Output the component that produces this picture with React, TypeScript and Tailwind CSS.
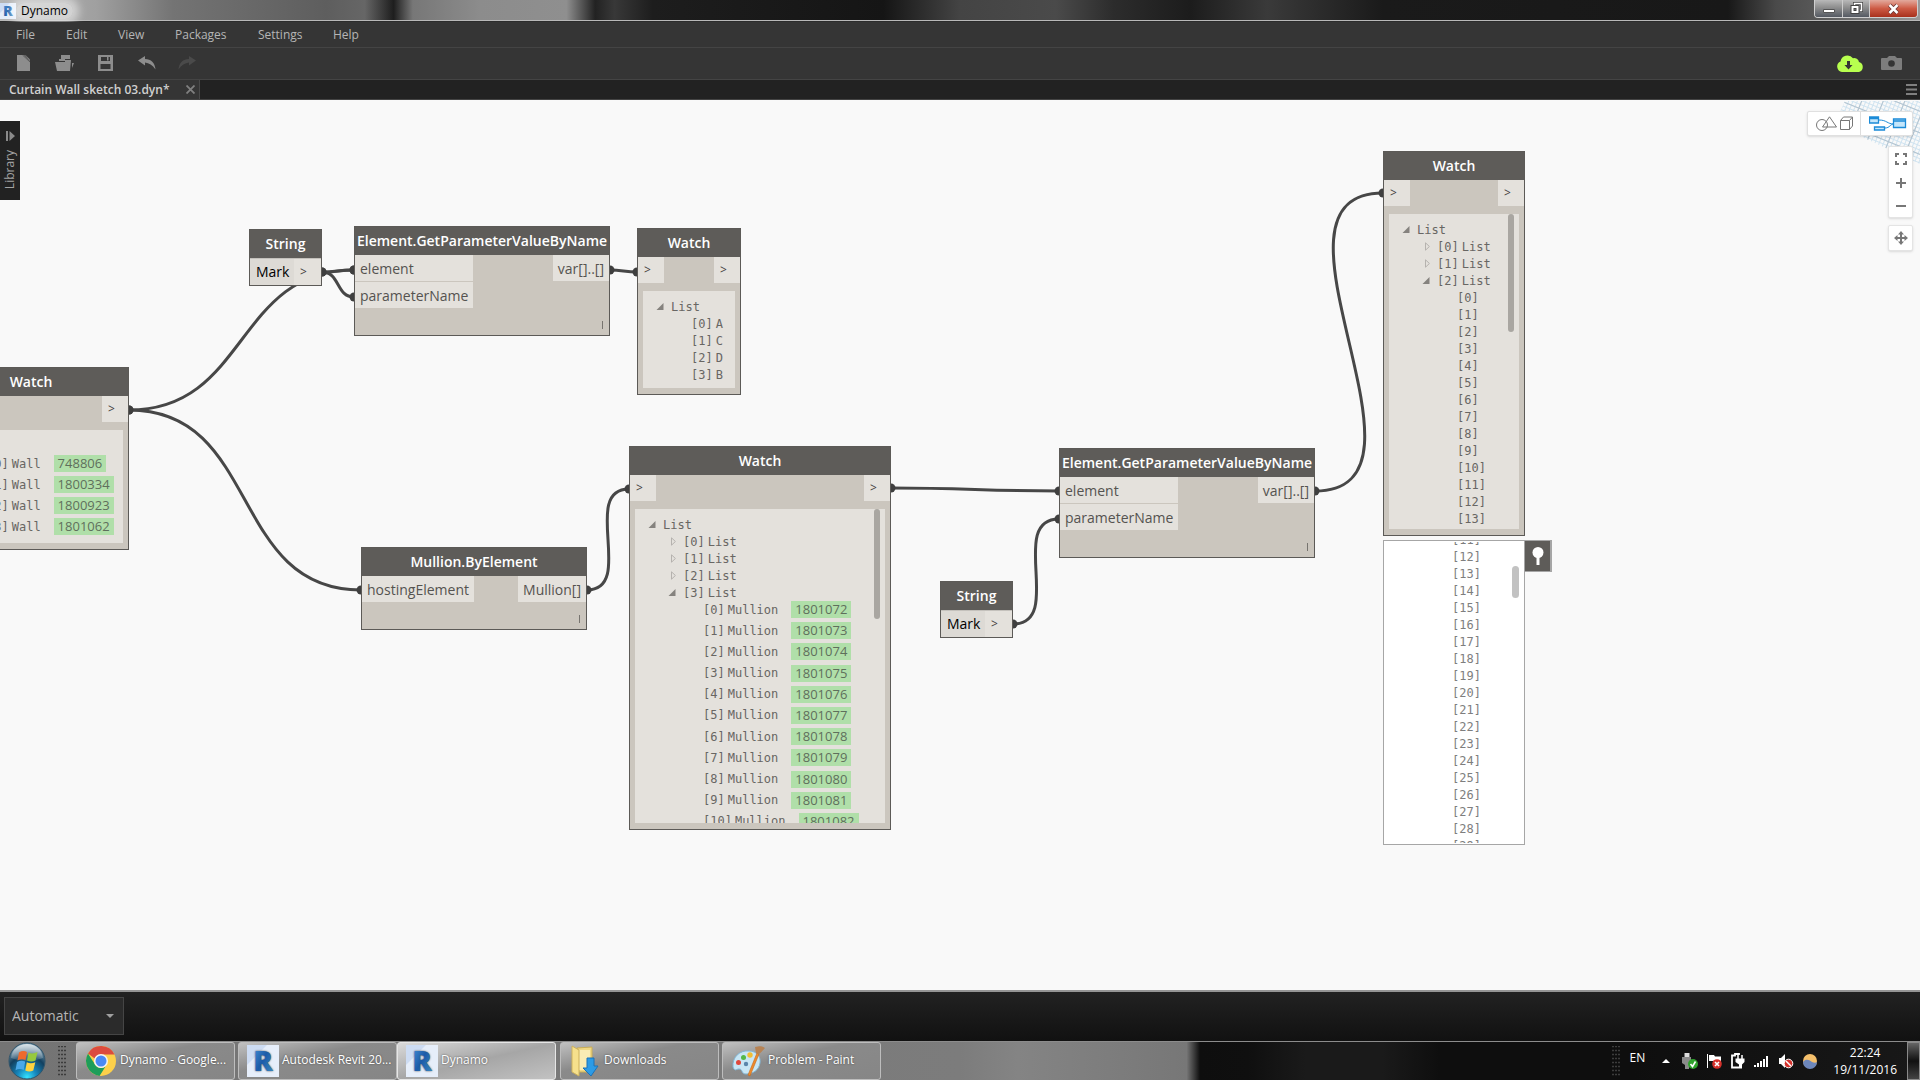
import type { ReactNode } from "react";
import { clsx } from "clsx";

const MENUS = [
    { label: "File", className: "w-[50px]" },
    { label: "Edit", className: "w-[52px]" },
    { label: "View", className: "w-[57px]" },
    { label: "Packages", className: "w-[83px]" },
    { label: "Settings", className: "w-[75px]" },
    { label: "Help", className: "w-[50px]" },
];

// [x1, y1, x2, y2] in canvas coordinates
const WIRES = [
    [129, 310, 354, 170],
    [129, 310, 361, 490],
    [322, 172, 354, 170],
    [322, 172, 354, 197],
    [610, 170, 637, 172],
    [587, 490, 629, 389],
    [891, 388, 1059, 391],
    [1013, 524, 1059, 419],
    [1315, 391, 1383, 93],
];

const WALLS = ["748806", "1800334", "1800923", "1801062"];
const MULLIONS = Array.from({ length: 11 }, (_, i) => String(1801072 + i));
const MARKS = ["A", "C", "D", "B"];

function wirePath([x1, y1, x2, y2]: number[]) {
    const off = Math.round(Math.hypot(x2 - x1, y2 - y1) * 0.45);
    return `M${x1} ${y1} C${x1 + off} ${y1} ${x2 - off} ${y2} ${x2} ${y2}`;
}

function Wires() {
    return (
        <svg className="absolute inset-0 h-full w-full" fill="none" aria-hidden="true">
            {WIRES.map((w) => (
                <g key={w.join()}>
                    <path d={wirePath(w)} stroke="#474747" strokeWidth="3" />
                    <circle cx={w[0]} cy={w[1]} r="4.5" fill="#3f3f3f" />
                    <circle cx={w[2]} cy={w[3]} r="4.5" fill="#3f3f3f" />
                </g>
            ))}
        </svg>
    );
}

/* ---------- nodes ---------- */

function Node({ title, className, children }: { title: string; className: string; children: ReactNode }) {
    return (
        <section className={clsx("absolute flex flex-col border border-[#5c5a57] bg-[#cbc6be]", className)}>
            <h2 className="flex h-7 shrink-0 items-center justify-center bg-[#5e5c59] pb-[2px] text-[14px] font-semibold whitespace-nowrap text-white">
                {title}
            </h2>
            {children}
        </section>
    );
}

function Port({ label, className }: { label: string; className?: string }) {
    return (
        <div className={clsx("flex h-[26px] items-center bg-[#e4e1dc] px-[5px] text-[14px] text-[#555350]", className)}>
            {label}
        </div>
    );
}

function ArrowPort() {
    return (
        <div className="flex h-[26px] w-[26px] items-center bg-[#e4e1dc] pl-[6px] text-[12px] text-[#45433f]">&gt;</div>
    );
}

function Lacing() {
    return <div className="mt-auto mr-[6px] mb-[6px] h-2 w-px self-end bg-[#77746f]" />;
}

function Watch({
    className,
    scroll,
    children,
}: {
    className: string;
    scroll?: string;
    children: ReactNode;
}) {
    return (
        <Node title="Watch" className={className}>
            <div className="flex justify-between">
                <ArrowPort />
                <ArrowPort />
            </div>
            <div className="relative mx-[5px] mt-2 mb-[6px] min-h-0 flex-1 overflow-hidden bg-[#e4e1dc] pt-[7px]">
                {children}
                {scroll && <div className={clsx("absolute top-0 right-[5px] w-[6px] rounded-full bg-[#a9a6a1]", scroll)} />}
            </div>
        </Node>
    );
}

function StringNode({ id, className }: { id: string; className: string }) {
    return (
        <Node title="String" className={className}>
            <div className="flex border-t border-[#c4c1bc] bg-[#e4e1dc]">
                <input
                    id={id}
                    aria-label="String value"
                    defaultValue="Mark"
                    className="h-[26px] w-11 bg-[#dddad5] pb-px pl-[6px] text-[14px] text-black outline-none"
                />
                <ArrowPort />
            </div>
        </Node>
    );
}

function GetParameterNode({ className }: { className: string }) {
    return (
        <Node title="Element.GetParameterValueByName" className={className}>
            <div className="flex items-start justify-between">
                <div className="flex w-[118px] flex-col gap-px">
                    <Port label="element" />
                    <Port label="parameterName" />
                </div>
                <Port label="var[]..[]" />
            </div>
            <Lacing />
        </Node>
    );
}

/* ---------- watch tree ---------- */

const INDENT = ["pl-[13px]", "pl-[33px]", "pl-[53px]"];

function Expander({ open }: { open: boolean }) {
    return (
        <button aria-label={open ? "Collapse" : "Expand"} className="block">
            <svg width="8" height="9" viewBox="0 0 8 9">
                {open ? (
                    <path d="M7.5 1v7H.5z" fill="#85827e" />
                ) : (
                    <path d="M3.5.8v7.4L7.4 4.5z" fill="none" stroke="#b5b2ae" />
                )}
            </svg>
        </button>
    );
}

function Row({
    depth,
    index,
    label,
    chip,
    open,
}: {
    depth: number;
    index?: number;
    label?: string;
    chip?: string;
    open?: boolean;
}) {
    return (
        <li
            className={clsx(
                "flex h-[17px] shrink-0 items-center font-['DejaVu_Sans_Mono','Liberation_Mono',monospace] text-[12px] whitespace-nowrap",
                INDENT[depth]
            )}
        >
            <span className="w-[15px] shrink-0">{open !== undefined && <Expander open={open} />}</span>
            {index !== undefined && <span className="mr-[3px]">[{index}]</span>}
            {label}
            {chip && (
                <a
                    href="#element"
                    className="ml-[13px] h-[17px] bg-[#b0dfa9] px-[4px] font-['Open_Sans',sans-serif] text-[13px] leading-[17px] text-[#5f6f5c]"
                >
                    {chip}
                </a>
            )}
        </li>
    );
}

/* ---------- icons ---------- */

function RevitLogo({ size }: { size: number }) {
    return (
        <svg width={size} height={size} viewBox="0 0 32 32" className="shrink-0" aria-hidden="true">
            <defs>
                <linearGradient id="revit" x1="0" y1="0" x2="1" y2="1">
                    <stop offset="0" stopColor="#4d9be0" />
                    <stop offset=".5" stopColor="#1c5ba8" />
                    <stop offset="1" stopColor="#3f8fc4" />
                </linearGradient>
            </defs>
            <path d="M0 0h32v32H0z" fill="#e6eefa" />
            <path d="M0 20 20 0H0z" fill="#cddcf3" />
            <text x="16" y="26" textAnchor="middle" fontFamily="Open Sans" fontWeight="800" fontSize="29" fill="url(#revit)">
                R
            </text>
        </svg>
    );
}

function StartOrb() {
    return (
        <svg width="38" height="38" viewBox="0 0 38 38">
            <defs>
                <radialGradient id="orb" cx=".5" cy=".95" r=".9">
                    <stop offset="0" stopColor="#35e4ff" />
                    <stop offset=".3" stopColor="#1687bd" />
                    <stop offset=".65" stopColor="#12405f" />
                    <stop offset="1" stopColor="#7f9fb2" />
                </radialGradient>
                <linearGradient id="orbGloss" x1="0" y1="0" x2="0" y2="1">
                    <stop offset="0" stopColor="#fff" stopOpacity=".7" />
                    <stop offset="1" stopColor="#fff" stopOpacity=".1" />
                </linearGradient>
            </defs>
            <circle cx="19" cy="19" r="18" fill="url(#orb)" stroke="#31556b" />
            <path d="M3 16C4 7 11 2 19 2s15 5 16 14c-10 4-22 4-32 0z" fill="url(#orbGloss)" />
            <path d="M11 10.500q4-2.500 8-.5l-1.500 8q-4-1.500-8 .5z" fill="#ee6a2c" />
            <path d="M20.500 10.500q4 2 9-.5l-2 8.500q-4 2-8.500 0z" fill="#96c93d" />
            <path d="M9 20q4-2.300 8.200-.4L15.700 28q-4-2-8.200.2z" fill="#4aa8e8" />
            <path d="M18.800 20.300q4 2 8.500 0l-2 8.200q-4 2-8 0z" fill="#fdd23e" />
        </svg>
    );
}

function ChromeLogo() {
    return (
        <svg width="32" height="32" viewBox="0 0 32 32" className="shrink-0">
            <circle cx="16" cy="16" r="15" fill="#fdd04a" />
            <path d="M3 8.500A15 15 0 0 1 29.500 9.500H16a7 7 0 0 0-6.300 4z" fill="#dc4b3e" />
            <path d="M3 8.500a15 15 0 0 0 11.500 22.400L20.500 21.500a7 7 0 0 1-10.500-2z" fill="#1d9d5a" />
            <circle cx="16" cy="16" r="7" fill="#f4f4f4" />
            <circle cx="16" cy="16" r="5.500" fill="#4a89f4" />
        </svg>
    );
}

function FolderIcon() {
    return (
        <svg width="32" height="32" viewBox="0 0 32 32" className="shrink-0">
            <path d="M8 3 23 2v25H10z" fill="#f0d884" stroke="#c9ad56" />
            <path d="M10 5h11v20H10z" fill="#f9ecb5" />
            <path d="m3 1 7 4v26l-7-4z" fill="#f6e08c" stroke="#cdb15c" />
            <path d="M18 13h7v8h4l-7 10-8-8h4z" fill="#2c9be6" stroke="#1b73b9" />
        </svg>
    );
}

function PaintIcon() {
    return (
        <svg width="34" height="32" viewBox="0 0 34 32" className="shrink-0">
            <path d="M2 22C1 12 9 5 18 6c8 0 12 6 11 12-1 7-7 11-14 11-5 0-3-5-7-5-3 0-4 3-6-2z" fill="#c8e6f5" stroke="#82b7d6" />
            <circle cx="7.500" cy="17.500" r="2.500" fill="#e0483c" />
            <circle cx="12.500" cy="12.500" r="2.500" fill="#53b848" />
            <circle cx="19" cy="10" r="2.700" fill="#f1be36" />
            <circle cx="15" cy="19" r="2.200" fill="#5a86aa" />
            <path d="m26 8 2 1-9 22-2-1z" fill="#ee8a2d" stroke="#c46a1b" strokeWidth=".6" />
            <path d="M24 2c4 0 5-2 10 1-2 2-3 4-6 6l-3-1z" fill="#b78354" />
        </svg>
    );
}

function Grip() {
    return (
        <svg width="8" height="30" viewBox="0 0 8 30" aria-hidden="true">
            {[0, 4, 8, 12, 16, 20, 24, 28].map((y) => (
                <path key={y} d={`M0 ${y + 0.5}h2m1 0h2m1 0h2`} stroke="#3c3c3c" strokeWidth="1.500" />
            ))}
        </svg>
    );
}

/* ---------- window chrome ---------- */

function TitleBar() {
    return (
        <header className="flex h-[22px] shrink-0 items-start justify-between border-b border-[#2c2c2c] bg-[linear-gradient(90deg,#b4b4b4_0%,#a0a0a0_5%,#747474_9%,#6e6e6e_11%,#5e5e5e_17%,#666_19%,#1e1e1e_20.500%,#777_21.500%,#8c8c8c_25%,#8f8f8f_29.500%,#222_31%,#383838_32%,#1d1d1d_34%,#151515_46%,#444_50%,#4a4a4a_55%,#2c2c2c_58%,#1c1c1c_62%,#3a3a3a_66%,#1a1a1a_72%,#181818_90%,#4a4a4a_92.500%,#5b5b5b_95%,#777_97%,#999_100%)]">
            <div className="flex h-[21px] flex-1 items-center border-b border-[#b9b9b9] pt-[2px]">
                <RevitLogo size={16} />
                <h1 className="rounded-full bg-white/50 px-[5px] text-[12px] leading-4 text-black shadow-[0_0_8px_6px_rgba(255,255,255,0.5)]">
                    Dynamo
                </h1>
            </div>
            <div className="flex h-[21px] border-b border-[#b9b9b9] pr-[2px]">
                <div className="flex h-[18px] overflow-hidden rounded-b-[4px] border border-t-0 border-[#d0d0d0]">
                    <button
                        aria-label="Minimize"
                        className="flex w-7 items-center justify-center border-r border-[#ccc] bg-linear-to-b from-[#b9b9b9] via-[#8d8d8d] via-45% to-[#555a63]"
                    >
                        <svg width="12" height="12" viewBox="0 0 12 12">
                            <path d="M.5 6.500h11v3H.5z" fill="#fff" stroke="#555" />
                        </svg>
                    </button>
                    <button
                        aria-label="Restore"
                        className="flex w-[27px] items-center justify-center border-r border-[#ccc] bg-linear-to-b from-[#b9b9b9] via-[#8d8d8d] via-45% to-[#555a63]"
                    >
                        <svg width="13" height="13" viewBox="0 0 13 13" fill="none">
                            <path d="M4.500 3V1.500h7v7H10" stroke="#444" strokeWidth="3" />
                            <path d="M4.500 3V1.500h7v7H10" stroke="#fff" strokeWidth="1.500" />
                            <path d="M2.500 5h5v5h-5z" stroke="#444" strokeWidth="4" />
                            <path d="M2.500 5h5v5h-5z" stroke="#fff" strokeWidth="2" />
                        </svg>
                    </button>
                    <button
                        aria-label="Close"
                        className="flex w-[47px] items-center justify-center bg-linear-to-b from-[#e2a99d] via-[#cd5a44] via-50% to-[#a8301c]"
                    >
                        <svg width="13" height="12" viewBox="0 0 13 12">
                            <path d="m2.500 2 8 8m0-8-8 8" stroke="#633" strokeWidth="4" />
                            <path d="m2.500 2 8 8m0-8-8 8" stroke="#fff" strokeWidth="2.500" />
                        </svg>
                    </button>
                </div>
            </div>
        </header>
    );
}

function MenuBar() {
    return (
        <nav className="flex h-[26px] shrink-0 items-center border-b border-[#444] bg-[#353535] pl-4">
            {MENUS.map((m) => (
                <button key={m.label} className={clsx("text-left text-[12px] leading-4 text-[#b5b5b5]", m.className)}>
                    {m.label}
                </button>
            ))}
        </nav>
    );
}

function Toolbar() {
    return (
        <div className="flex h-[31px] shrink-0 items-center justify-between bg-[#353535] pr-[18px] pb-px pl-[17px]">
            <div className="flex items-center">
                <button aria-label="New" className="w-[38px]">
                    <svg width="13" height="16" viewBox="0 0 13 16">
                        <path d="M0 0h7l6 6v10H0z" fill="#8d8d8d" />
                        <path d="M8 0h.5L13 4.500V6z" fill="#8d8d8d" />
                        <path d="M5.500 0 13 7" stroke="#5a5a5a" fill="none" />
                    </svg>
                </button>
                <button aria-label="Open" className="w-[43px]">
                    <svg width="19" height="16" viewBox="0 0 19 16" fill="#8d8d8d">
                        <path d="M6 0h9v4l-5 0v2H4V4h2z" />
                        <path d="M0 7h10V5h6l-1 11H2z" />
                        <path d="M17 8h2l-2 5z" />
                    </svg>
                </button>
                <button aria-label="Save" className="w-10">
                    <svg width="15" height="16" viewBox="0 0 15 16">
                        <path d="M0 0h15v16H0z" fill="#8d8d8d" />
                        <path d="M3 2h9v4H3zM2.500 9h10v5h-10z" fill="#353535" />
                        <path d="M9 1.500h1.500v4H9z" fill="#8d8d8d" />
                    </svg>
                </button>
                <button aria-label="Undo" className="w-10">
                    <svg width="18" height="14" viewBox="0 0 18 14">
                        <path d="m0 4.500 7-4.500v3c6 0 10 4 10.500 10.500C14.500 9 11 7 7 6.500v3z" fill="#8d8d8d" />
                    </svg>
                </button>
                <button aria-label="Redo" disabled>
                    <svg width="18" height="14" viewBox="0 0 18 14">
                        <path d="m18 4.500-7-4.500v3C5 3 1 7 .5 13.500 3.500 9 7 7 11 6.500v3z" fill="#4a4a4a" />
                    </svg>
                </button>
            </div>
            <div className="flex items-center gap-[17px]">
                <button aria-label="Download update">
                    <svg width="28" height="17" viewBox="0 0 28 17">
                        <path d="M6 17a5.500 5.500 0 0 1-1.500-10.500A7 7 0 0 1 17 3.200a5 5 0 0 1 6 3.800A5.200 5.200 0 0 1 23 17z" fill="#b8ff4f" />
                        <path d="M11 6h3v4h2.500l-4 4.500-4-4.500H11z" fill="#353535" />
                    </svg>
                </button>
                <button aria-label="Export image">
                    <svg width="21" height="14" viewBox="0 0 21 14">
                        <path d="M0 3q0-1 1-1h5l2-2h6l2 2h4q1 0 1 1v10q0 1-1 1H1q-1 0-1-1z" fill="#7d7d7d" />
                        <circle cx="10.500" cy="7.500" r="3.300" fill="#353535" />
                    </svg>
                </button>
            </div>
        </div>
    );
}

function TabBar() {
    return (
        <div className="flex h-[21px] shrink-0 items-stretch justify-between border-t border-b border-[#444] bg-[#222]">
            <div className="flex w-[200px] items-center justify-between border-r border-[#4a4a4a] bg-[#353535] pr-1 pl-[9px]">
                <button className="text-[12px] leading-4 font-semibold text-[#d0d0d0]">Curtain Wall sketch 03.dyn*</button>
                <button aria-label="Close tab">
                    <svg width="9" height="9" viewBox="0 0 9 9">
                        <path d="m.5.5 8 8m0-8-8 8" stroke="#808080" strokeWidth="1.800" />
                    </svg>
                </button>
            </div>
            <button aria-label="Open tabs" className="pr-[3px]">
                <svg width="11" height="11" viewBox="0 0 11 11">
                    <path d="M0 1h11M0 5.500h11M0 10h11" stroke="#808080" strokeWidth="2" />
                </svg>
            </button>
        </div>
    );
}

function BackgroundGrid() {
    return (
        <svg className="absolute top-0 right-0" width="80" height="66" viewBox="0 0 80 66" fill="none" aria-hidden="true">
            <defs>
                <pattern id="fine" width="4" height="4" patternUnits="userSpaceOnUse" patternTransform="rotate(22)">
                    <path d="M0 .5h4M.5 0v4" stroke="#cfe3f0" />
                </pattern>
                <pattern id="coarse" width="20" height="20" patternUnits="userSpaceOnUse" patternTransform="rotate(22)">
                    <path d="M0 .5h20M.5 0v20" stroke="#b3c3cf" />
                </pattern>
            </defs>
            <path d="M5 1h75v63L20 36 0 12z" fill="url(#fine)" />
            <path d="M5 1h75v63L20 36 0 12z" fill="url(#coarse)" />
        </svg>
    );
}

function ViewControls() {
    return (
        <div className="absolute top-[11px] right-[7px] flex flex-col items-end">
            <div className="flex h-[25px] rounded-[2px] border border-[#e0e0e0] bg-white shadow-sm">
                <button aria-label="3D view" className="flex w-[53px] items-center justify-center border-r border-[#ddd]">
                    <svg width="37" height="15" viewBox="0 0 37 15" fill="none" stroke="#777">
                        <circle cx="6" cy="9" r="5.500" />
                        <path d="M13.500.8 20.500 11h-14zM24.500 4.500h9v9h-9zl3-3.500h9v9l-3 3.500m0-9 3-3.500" />
                    </svg>
                </button>
                <button aria-label="Graph view" className="flex w-[51px] items-center justify-end pr-[5px]">
                    <svg width="38" height="15" viewBox="0 0 38 15" fill="#c4e6fb" stroke="#1b8bd8">
                        <path d="M10 4c8 0 8 4 15 4M16 12c5 0 5-4 9-4" fill="none" />
                        <path d="M.5 1h9v6h-9zM.5 2.500h9M5.500 11h10v3h-10zM24.500 3h12v8.500h-12zM24.500 5h12" strokeWidth="1.300" />
                    </svg>
                </button>
            </div>
            <div className="mt-[10px] flex w-[25px] flex-col items-center rounded-[2px] border border-[#e4e4e4] bg-white text-[#777] shadow-sm">
                <button aria-label="Zoom to fit" className="flex h-6 items-center">
                    <svg width="12" height="12" viewBox="0 0 12 12" fill="none" stroke="currentColor" strokeWidth="2">
                        <path d="M1 4V1h3M8 1h3v3M11 8v3H8M4 11H1V8" />
                    </svg>
                </button>
                <button aria-label="Zoom in" className="flex h-6 items-center">
                    <svg width="10" height="10" viewBox="0 0 10 10" stroke="currentColor" strokeWidth="2">
                        <path d="M5 0v10M0 5h10" />
                    </svg>
                </button>
                <button aria-label="Zoom out" className="flex h-[22px] items-center">
                    <svg width="10" height="10" viewBox="0 0 10 10" stroke="currentColor" strokeWidth="2">
                        <path d="M0 5h10" />
                    </svg>
                </button>
            </div>
            <button
                aria-label="Pan"
                className="mt-[7px] flex h-[26px] w-[25px] items-center justify-center rounded-[2px] border border-[#e4e4e4] bg-white text-[#777] shadow-sm"
            >
                <svg width="14" height="14" viewBox="0 0 14 14" fill="currentColor">
                    <path d="M6 2h2v10H6zM2 6h10v2H2z" />
                    <path d="m7 0 3 3.500H4zM7 14l3-3.500H4zM0 7l3.500-3v6zM14 7l-3.500-3v6z" />
                </svg>
            </button>
        </div>
    );
}

function Canvas() {
    return (
        <main className="relative min-h-0 flex-1 overflow-hidden bg-[#f9f9f9]">
            <BackgroundGrid />
            <Wires />

            <Watch className="top-[267px] -left-[67px] h-[183px] w-[196px]">
                <ul className="text-[#686663]">
                    <Row depth={0} label="List" open />
                </ul>
                <ul className="mt-px flex flex-col gap-1 text-[#686663]">
                    {WALLS.map((id, i) => (
                        <Row key={id} depth={1} index={i} label="Wall" chip={id} />
                    ))}
                </ul>
            </Watch>

            <StringNode id="string-1" className="top-[129px] left-[249px] w-[73px]" />
            <GetParameterNode className="top-[126px] left-[354px] h-[110px] w-[256px]" />

            <Watch className="top-[128px] left-[637px] h-[167px] w-[104px]">
                <ul className="text-[#686663]">
                    <Row depth={0} label="List" open />
                    {MARKS.map((mark, i) => (
                        <Row key={mark} depth={1} index={i} label={mark} />
                    ))}
                </ul>
            </Watch>

            <Node title="Mullion.ByElement" className="top-[447px] left-[361px] h-[83px] w-[226px]">
                <div className="flex justify-between">
                    <Port label="hostingElement" className="w-[112px]" />
                    <Port label="Mullion[]" />
                </div>
                <Lacing />
            </Node>

            <Watch className="top-[346px] left-[629px] h-[384px] w-[262px]" scroll="h-[110px]">
                <ul className="text-[#686663]">
                    <Row depth={0} label="List" open />
                    {[0, 1, 2, 3].map((i) => (
                        <Row key={i} depth={1} index={i} label="List" open={i === 3} />
                    ))}
                </ul>
                <ul className="flex h-[229px] flex-col justify-between text-[#686663]">
                    {MULLIONS.map((id, i) => (
                        <Row key={id} depth={2} index={i} label="Mullion" chip={id} />
                    ))}
                </ul>
            </Watch>

            <GetParameterNode className="top-[348px] left-[1059px] h-[110px] w-[256px]" />
            <StringNode id="string-2" className="top-[481px] left-[940px] w-[73px]" />

            <Watch className="top-[51px] left-[1383px] h-[385px] w-[142px]" scroll="h-[118px]">
                <ul className="text-[#686663]">
                    <Row depth={0} label="List" open />
                    {[0, 1, 2].map((i) => (
                        <Row key={i} depth={1} index={i} label="List" open={i === 2} />
                    ))}
                    {Array.from({ length: 14 }, (_, i) => (
                        <Row key={i} depth={2} index={i} />
                    ))}
                </ul>
            </Watch>

            {/* Preview bubble under the last watch node */}
            <div className="absolute top-[440px] left-[1383px] flex items-start">
                <div className="relative flex h-[305px] w-[142px] flex-col border border-[#a6a6a6] bg-white py-px">
                    <ul className="flex min-h-0 flex-1 flex-col justify-center overflow-hidden text-[#7e7e7e]">
                        {Array.from({ length: 19 }, (_, i) => (
                            <Row key={i} depth={2} index={i + 11} />
                        ))}
                    </ul>
                    <div className="absolute top-[25px] right-[5px] h-8 w-[7px] rounded-full bg-[#c2c2c2]" />
                </div>
                <button
                    aria-label="Pin preview"
                    className="flex h-8 w-[27px] items-center justify-center border-t border-r-2 border-b border-[#a6a6a6] bg-[#5e5c59]"
                >
                    <svg width="12" height="18" viewBox="0 0 12 18" fill="#fff">
                        <circle cx="6" cy="5.500" r="5.500" />
                        <path d="M4.500 10h3v8h-3z" />
                    </svg>
                </button>
            </div>

            <button
                aria-label="Library"
                className="absolute top-[21px] left-0 flex h-[79px] w-5 flex-col items-center gap-[9px] bg-[#222] pt-[10px] text-[#a3a3a3]"
            >
                <svg width="9" height="10" viewBox="0 0 9 10" fill="#8a8a8a">
                    <path d="M0 0h2v10H0zM3.500 0 9 5l-5.500 5z" />
                </svg>
                <span className="rotate-180 text-[12px] leading-4 [writing-mode:vertical-rl]">Library</span>
            </button>
            <ViewControls />
        </main>
    );
}

function RunBar() {
    return (
        <div className="flex h-[51px] shrink-0 items-start border-t-2 border-[#959595] bg-linear-to-b from-[#222] to-[#111] pt-[5px] pl-1">
            <label className="relative flex items-center">
                <select
                    aria-label="Run mode"
                    className="h-[38px] w-[120px] appearance-none border border-[#454545] bg-[#2b2b2b] pb-[2px] pl-[7px] text-[14px] text-[#b5b5b5]"
                >
                    <option>Automatic</option>
                    <option>Manual</option>
                </select>
                <svg className="pointer-events-none absolute right-[10px]" width="8" height="4" viewBox="0 0 8 4">
                    <path d="M0 0h8L4 4z" fill="#a0a0a0" />
                </svg>
            </label>
        </div>
    );
}

function TaskButton({
    icon,
    label,
    active,
    className,
}: {
    icon: ReactNode;
    label: string;
    active?: boolean;
    className?: string;
}) {
    return (
        <button
            className={clsx(
                "flex h-[38px] w-[159px] items-center gap-[3px] rounded-[3px] border pl-[8px] text-[12px] whitespace-nowrap text-white [text-shadow:0_0_2px_#444]",
                active
                    ? "border-[#e6e6e6] bg-linear-to-br from-[#dadada] via-[#a6a6a6] to-[#c2c2c2]"
                    : "border-[#bdbdbd] bg-linear-to-br from-[#c0c0c0] via-[#8a8a8a] via-40% to-[#868686]",
                className
            )}
        >
            {icon}
            <span className="pb-[2px]">{label}</span>
        </button>
    );
}

function Tray() {
    return (
        <div className="flex h-full items-center text-white">
            <Grip />
            <button className="ml-[10px] pb-[6px] text-[12px]">EN</button>
            <button aria-label="Show hidden icons" className="ml-[17px]">
                <svg width="8" height="4" viewBox="0 0 8 4">
                    <path d="M0 4h8L4 0z" fill="#fff" />
                </svg>
            </button>
            <div className="ml-[12px] flex items-center gap-2">
                <svg width="16" height="16" viewBox="0 0 16 16">
                    <path d="M2.500 0h5v5h-5z" fill="#ddd" />
                    <path d="M0 4h9v6l-2 2v4H3v-4l-3-2z" fill="#8b8b8b" />
                    <circle cx="11" cy="11" r="5" fill="#2fa32c" />
                    <path d="m8.500 11 2 2.500 3-5" fill="none" stroke="#fff" strokeWidth="1.600" />
                </svg>
                <svg width="16" height="16" viewBox="0 0 16 16">
                    <path d="M1 1h1v14H1zM3 2h5l1 1.500h6V9H8L7 8H3z" fill="#fff" />
                    <circle cx="11" cy="11" r="4.800" fill="#d5312b" />
                    <path d="m9 9 4 4m0-4-4 4" stroke="#fff" strokeWidth="1.600" />
                </svg>
                <svg width="16" height="16" viewBox="0 0 16 16" fill="none">
                    <path d="M9 2V1H5v1.500H2v12h7" stroke="#fff" strokeWidth="1.800" />
                    <path d="M8 2v4M12 2v4" stroke="#fff" strokeWidth="1.500" />
                    <path d="M5.500 5.500h9V9l-2.500 2.500v4H9v-4L5.500 9z" fill="#fff" />
                </svg>
                <svg width="16" height="16" viewBox="0 0 16 16" fill="#fff">
                    <path d="M0 12h2v2H0zM3 10h2v4H3zM6 8h2v6H6zM9 6h2v8H9zM12 3h2v11h-2z" />
                </svg>
                <svg width="16" height="16" viewBox="0 0 16 16">
                    <path d="M1 5h2l4-4v14l-4-4H1z" fill="#fff" />
                    <circle cx="10.500" cy="10.500" r="4.300" fill="#d5312b" stroke="#fff" />
                    <path d="m8 8 5 5" stroke="#fff" strokeWidth="1.500" />
                </svg>
                <svg width="16" height="16" viewBox="0 0 16 16">
                    <circle cx="8" cy="8" r="7" fill="#f4bf6b" />
                    <path d="M1 9c3-4 7-2 9 0 2 1 4 1 5 0a7 7 0 0 1-14 0z" fill="#6d87bb" />
                </svg>
            </div>
            <time className="ml-[15px] text-center text-[12px] leading-[17px]">
                22:24
                <br />
                19/11/2016
            </time>
            <button
                aria-label="Show desktop"
                className="ml-[10px] h-[38px] w-[13px] border border-[#8a8a8a] bg-linear-to-b from-[#666] via-[#111] to-[#444]"
            />
        </div>
    );
}

function Taskbar() {
    return (
        <footer className="flex h-[39px] shrink-0 items-start justify-between border-t border-[#8c8c8c] bg-[linear-gradient(90deg,#747474_0%,#7c7c7c_50%,#848484_53%,#777_61.800%,#0e0e0e_62.500%,#0f0f0f_65%,#1a1a1a_68%,#1a1a1a_72%,#0e0e0e_75%,#0e0e0e_85%,#181818_100%)]">
            <div className="flex h-full items-center">
                <button aria-label="Start" className="ml-2">
                    <StartOrb />
                </button>
                <div className="mr-[10px] ml-3">
                    <Grip />
                </div>
                <div className="flex">
                    <TaskButton icon={<ChromeLogo />} label="Dynamo - Google..." className="mr-[3px]" />
                    <TaskButton icon={<RevitLogo size={32} />} label="Autodesk Revit 20..." />
                    <TaskButton icon={<RevitLogo size={32} />} label="Dynamo" active className="mr-[4px]" />
                    <TaskButton icon={<FolderIcon />} label="Downloads" className="mr-[3px]" />
                    <TaskButton icon={<PaintIcon />} label="Problem - Paint" />
                </div>
            </div>
            <Tray />
        </footer>
    );
}

export default function App() {
    return (
        <div className="flex h-screen flex-col overflow-hidden bg-[#222] font-['Open_Sans','Noto_Sans',sans-serif]">
            <TitleBar />
            <MenuBar />
            <Toolbar />
            <TabBar />
            <Canvas />
            <RunBar />
            <Taskbar />
        </div>
    );
}
